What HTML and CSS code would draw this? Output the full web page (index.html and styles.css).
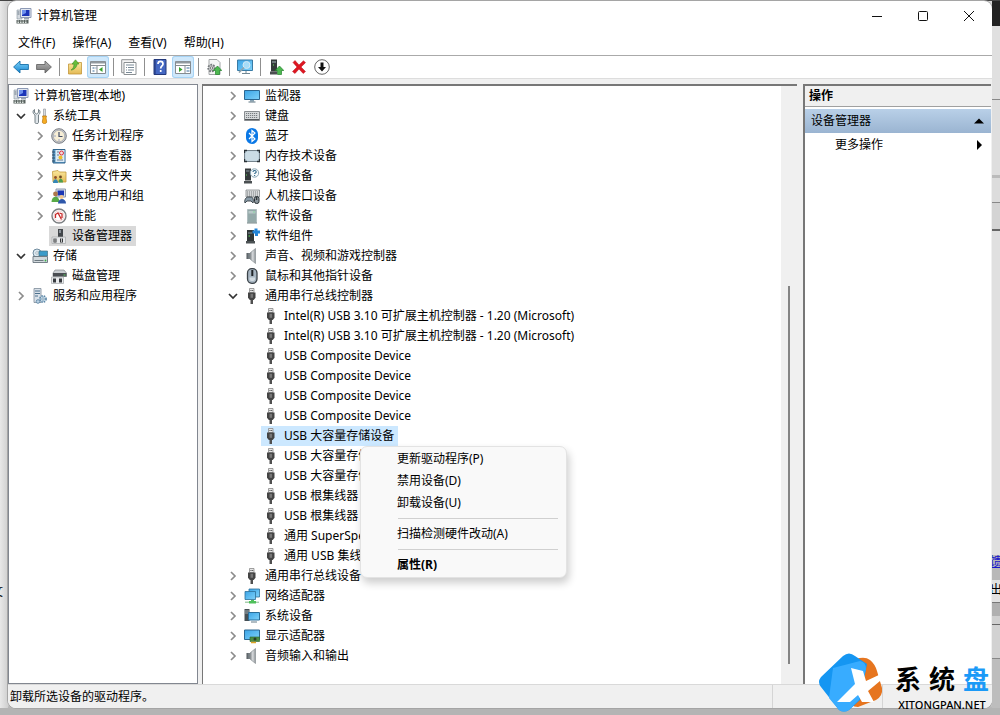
FILE: index.html
```html
<!DOCTYPE html>
<html lang="zh-CN">
<head>
<meta charset="utf-8">
<title>计算机管理</title>
<link rel="stylesheet" href="styles.css">
</head>
<body>
<svg class="sprite" aria-hidden="true">
  <defs>
    <linearGradient id="g-screen" x1="0" y1="0" x2="1" y2="1"><stop offset="0" stop-color="#3ba4e6"/><stop offset="1" stop-color="#7fd2fa"/></linearGradient>
    <linearGradient id="g-grey" x1="0" y1="0" x2="1" y2="0"><stop offset="0" stop-color="#7d8286"/><stop offset=".5" stop-color="#d9dcde"/><stop offset="1" stop-color="#8a8f93"/></linearGradient>
    <linearGradient id="g-fold" x1="0" y1="0" x2="0" y2="1"><stop offset="0" stop-color="#fbe9a0"/><stop offset="1" stop-color="#e3b955"/></linearGradient>
    <linearGradient id="g-back" x1="0" y1="0" x2="0" y2="1"><stop offset="0" stop-color="#7fd4fa"/><stop offset="1" stop-color="#1583cf"/></linearGradient>
    <linearGradient id="g-fwd" x1="0" y1="0" x2="0" y2="1"><stop offset="0" stop-color="#b8b8b8"/><stop offset="1" stop-color="#6f6f6f"/></linearGradient>
  </defs>
  <symbol id="computer" viewBox="0 0 16 16"><path d="M1 2h5v9H1z" fill="#d5dae0" stroke="#8793a0" stroke-width=".6"/><path d="M1.500 4h2M1.500 6h2" stroke="#6d7b88"/><path d="M4.500.5h10.500v9H4.500z" fill="#e3e8f0" stroke="#8d9ab5"/><path d="M6 2h7.500v6H6z" fill="#1c35b8"/><path d="M6 2h4v3l-4 2z" fill="#6e91ed"/><path d="M8 10h5v1.500H8z" fill="#9aa3b0"/><path d="M.5 12h12v3.500H.5z" fill="#59625f"/><path d="M1.500 13h10M1.500 14.500h10" stroke="#d9e0dc" stroke-dasharray="1.500 1"/></symbol>
  <symbol id="tools" viewBox="0 0 16 16"><path d="M2.500 1.500v3l2 1.500 2-1.500v-3c2 1 2 4 0 5.500v7.500c0 1.500-3.500 1.500-3.500 0V7C.500 5.500.500 2.500 2.500 1.500z" fill="#dfe5e9" stroke="#69757c" stroke-width=".9"/><path d="M11.500 1h2v7h-2z" fill="#d7dadd" stroke="#8d9298" stroke-width=".6"/><path d="M10.500 8h4l-.5 2 .7 4c0 2-4.400 2-4.400 0l.7-4z" fill="#f6ad23" stroke="#b7740d" stroke-width=".7"/></symbol>
  <symbol id="clock" viewBox="0 0 16 16"><circle cx="8" cy="8" r="7.300" fill="#c8cbd0" stroke="#6e7278" stroke-width=".9"/><circle cx="8" cy="8" r="5.700" fill="#f7eed6" stroke="#9da1a8" stroke-width=".7"/><path d="M8 4v4.500h3.500" fill="none" stroke="#414c66" stroke-width="1.200"/><path d="M3.500 8h1M8 12.500v-1" stroke="#3d5eb5"/></symbol>
  <symbol id="event" viewBox="0 0 16 16"><path d="M2 1.500h12v13.500H2z" fill="#5b9cc9" stroke="#32658d"/><path d="M4.500 2h9v12h-9z" fill="#dcebf6"/><path d="M1 4h3M1 7h3M1 10h3M1 13h3" stroke="#324f66"/><path d="M6 4h2M6 7h2M6 12h6" stroke="#687f92"/><circle cx="10.500" cy="5" r="2" fill="#f3d9da" stroke="#dc3140"/><circle cx="9.500" cy="9.500" r="2" fill="#eebf2e"/></symbol>
  <symbol id="share" viewBox="0 0 16 16"><path d="M1.500 3.500L7 2.500l1.500 1.500h6.500v10H2z" fill="url(#g-fold)" stroke="#c49a3b" stroke-width=".8"/><circle cx="4.500" cy="9.500" r="1.400" fill="#90512c"/><path d="M2 15c0-5 5-5 5 0z" fill="#3587b7"/><circle cx="9.500" cy="9" r="1.400" fill="#6b4825"/><path d="M7.500 14.500c0-5 4.500-5 4.500 0z" fill="#4c9e50"/></symbol>
  <symbol id="users" viewBox="0 0 16 16"><path d="M5 1h9.500v8H5z" fill="#d8dee9" stroke="#8c98ae"/><path d="M6.500 2.500H13v5H6.500z" fill="#1a35b4"/><circle cx="4.500" cy="6" r="2.400" fill="#ad774a"/><path d="M.5 14c0-7 8-7 8 0z" fill="#58aa47"/><circle cx="10.500" cy="9" r="2" fill="#efc58e"/><path d="M7 15.500c0-6 8-6 8 0z" fill="#2e57aa"/></symbol>
  <symbol id="perf" viewBox="0 0 16 16"><circle cx="8" cy="8" r="7" fill="#f8f8f8" stroke="#7c7f82" stroke-width="1.400"/><circle cx="8" cy="8" r="5" fill="#fff" stroke="#e6b8b8" stroke-width=".6"/><path d="M4.500 10V6.500L7 5l3.500 6.500M11 10V6L8.500 5" fill="none" stroke="#c72b2b" stroke-width="1.300"/></symbol>
  <symbol id="devmgr" viewBox="0 0 16 16"><path d="M7 1h5v8H7z" fill="#42464a"/><path d="M8 2h2v3H8z" fill="#899097"/><path d="M1 9h13.500v6.500H1z" fill="#e7e9eb" stroke="#a6a9ab" stroke-width=".7"/><path d="M2.500 10.500h3v4h-3zM9 10.500h3v4H9z" fill="#36393b"/><path d="M4 10.500V14M10.500 10.500V14" stroke="#fff" stroke-width=".7"/></symbol>
  <symbol id="storage" viewBox="0 0 16 16"><circle cx="5" cy="5" r="4" fill="#dce8ef" stroke="#6f8b9e"/><circle cx="5" cy="5" r="1.300" fill="#fff" stroke="#8798a4" stroke-width=".6"/><path d="M7 3h8.500v5H7z" fill="#3b9cca" stroke="#477284" stroke-width=".7"/><path d="M1 8.500h14.500v6H1z" fill="#d2d9dd" stroke="#69757d" stroke-width=".9"/><path d="M2.500 12.500h9" stroke="#6d7980"/><circle cx="13.500" cy="12.500" r=".9" fill="#38ae48"/></symbol>
  <symbol id="disk" viewBox="0 0 16 16"><path d="M4 2h9l2.500 3v3.500H2V5z" fill="#caced2" stroke="#74797e" stroke-width=".6"/><path d="M2 5h13.500v3.500H2z" fill="#4a4e52"/><path d="M12.500 7h2" stroke="#59ca5f"/><path d="M.5 9h12v6.500H.5z" fill="#e9ebed" stroke="#a4a8ab" stroke-width=".7"/><path d="M2 10.500h3v4H2zM8 10.500h3v4H8z" fill="#373a3e"/></symbol>
  <symbol id="services" viewBox="0 0 16 16"><path d="M2 .5h7v14H2z" fill="#d9e1e9" stroke="#7d8c99" stroke-width=".8"/><path d="M3 3h5M3 5.500h5M3 8h3" stroke="#4d718d"/><circle cx="11" cy="11" r="3.100" fill="#c8dcea" stroke="#5c86a6" stroke-dasharray="1.500 1" stroke-width="1.600"/><circle cx="11" cy="11" r="1.200" fill="#fff" stroke="#57819f" stroke-width=".7"/><circle cx="6" cy="13.500" r="1.800" fill="#b9d1e4" stroke="#6a8fab"/></symbol>
  <symbol id="monitor" viewBox="0 0 16 16"><path d="M.5 2.500h15v9H.5z" fill="url(#g-screen)" stroke="#2c6791"/><path d="M6 12h4v1.500H6z" fill="#89a4b4"/><path d="M4.500 14h7" stroke="#5c7482"/></symbol>
  <symbol id="keyboard" viewBox="0 0 16 16"><path d="M.5 3.500h15v9H.5z" fill="#d7dadc" stroke="#898d90"/><path d="M2 5.500h12M2 7.500h12M2 9.500h12" stroke="#787d80" stroke-dasharray="1.200 .8"/><path d="M1 11.500h14" stroke="#55595c"/></symbol>
  <symbol id="bluetooth" viewBox="0 0 16 16"><rect x="2" width="12" height="16" rx="6" fill="#0a78e6"/><path d="M5 5l6 6-3 2.500v-11L11 5l-6 6" fill="none" stroke="#fff" stroke-width="1.200"/></symbol>
  <symbol id="memory" viewBox="0 0 16 16"><rect x=".5" y="2.500" width="15" height="11" rx="1" fill="#c1d4df" stroke="#75838c"/><path d="M2 3.500h12v9H2z" fill="#cbdce5"/><path d="M.5 5V2.500H3M13 2.500h2.500V5M.5 11v2.500H3M13 13.500h2.500V11" fill="none" stroke="#293136" stroke-width="1.400"/></symbol>
  <symbol id="other" viewBox="0 0 16 16"><path d="M1 .5h6v12H1z" fill="#34393b"/><path d="M2 2h3.500v2H2z" fill="#5f696e"/><path d="M2 7h1" stroke="#64d45c"/><path d="M0 13h8v2.500H0z" fill="#4b5052"/><circle cx="10.500" cy="5" r="4.200" fill="#f5f9fb" stroke="#89a5b4"/><path d="M9 4c0-2 3.200-2 3.200 0 0 1-1.600 1-1.600 2M10.600 7v1" fill="none" stroke="#2f678a" stroke-width="1.100"/></symbol>
  <symbol id="hid" viewBox="0 0 16 16"><path d="M2 2h13.500v7H2z" fill="#dfe1e2" stroke="#84898c" stroke-width=".8"/><path d="M3 4h11M3 6h11M3 8h11" stroke="#73787b" stroke-dasharray="1.200 .8"/><path d="M1 15c-1-3 1-6 3-6h3c2 0 3 3 2 6l-2-2H3z" fill="#8b9ca8" stroke="#333c43" stroke-width=".9"/><rect x="10.500" y="8.500" width="4.500" height="7" rx="2" fill="#8b969d" stroke="#283035"/><path d="M12.700 9v3" stroke="#222"/></symbol>
  <symbol id="software" viewBox="0 0 16 16"><path d="M3.500 1.500h9v13h-9z" fill="#94a9a9" stroke="#b0bec0"/><path d="M4.500 3h7v2.500h-7z" fill="#b7c8c8"/><path d="M9.500 4h1" stroke="#54df77"/><path d="M3 15h10" stroke="#788989"/></symbol>
  <symbol id="component" viewBox="0 0 16 16"><path d="M3 2h7v11H3z" fill="#303637"/><path d="M4 4h4v2H4z" fill="#596568"/><path d="M4.500 8h1.500" stroke="#58da58"/><path d="M2 13h9v2.500H2z" fill="#4c5254"/><path d="M8.500 2.500h2V.5h3v2H16v3h-2v2.500h-3V5.500H8.500z" fill="#2384d7"/></symbol>
  <symbol id="speaker" viewBox="0 0 16 16"><path d="M3 5h3v6H3z" fill="#737b80"/><path d="M6 5l5.500-4.500v15L6 11z" fill="url(#g-grey)" stroke="#8a9094" stroke-width=".7"/><path d="M3 5v6" stroke="#4f5559"/></symbol>
  <symbol id="mouse" viewBox="0 0 16 16"><rect x="3.500" y=".7" width="9.500" height="14.600" rx="4.200" fill="#a8b6c2" stroke="#3c4349" stroke-width="1.300"/><path d="M8.300 2v6" stroke="#202427" stroke-width="2"/><path d="M5.500 9.500v2c1 2 4.500 2 5.500 0v-2" fill="#d3dce2"/></symbol>
  <symbol id="usb" viewBox="0 0 16 16"><path d="M5.500.5h4.500v4H5.500z" fill="#e6e6e6" stroke="#888" stroke-width=".8"/><path d="M6.500 2.500h1M8.200 2.500h1" stroke="#444"/><path d="M4 4.500h7.500v5.300L9.700 12H5.800L4 9.800z" fill="#444"/><path d="M6.500 5.800h2.600v4H6.500z" fill="#777"/><path d="M6.500 12h2.500v4H6.500z" fill="#505050"/></symbol>
  <symbol id="network" viewBox="0 0 16 16"><path d="M5 1h10.500v8H5z" fill="url(#g-screen)" stroke="#2c7099" stroke-width=".8"/><path d="M1 3.500h10.500v8H1z" fill="url(#g-screen)" stroke="#2c7099" stroke-width=".8"/><path d="M1 14.300h14" stroke="#a9cfae" stroke-width="1.400"/><path d="M7 12h3v1h2v2.500H5V13h2z" fill="#4fc05b"/></symbol>
  <symbol id="system" viewBox="0 0 16 16"><path d="M.5 1h5v12h-5z" fill="#464f54"/><path d="M1 3h4M1 5h4" stroke="#9ba9b0"/><path d="M4.500 4.500h11v7.500h-11z" fill="url(#g-screen)" stroke="#2a6e9a"/><path d="M7 14h6" stroke="#627b88"/></symbol>
  <symbol id="display" viewBox="0 0 16 16"><path d="M.5 2h15v9.500H.5z" fill="url(#g-screen)" stroke="#2c6791"/><path d="M6 9h9.500v4.500H6z" fill="#4d8d43" stroke="#29632d" stroke-width=".6"/><circle cx="11" cy="11" r="1.500" fill="#293d2c"/><path d="M7 14.500h5" stroke="#dfa526" stroke-width="1.500"/></symbol>
  <symbol id="back" viewBox="0 0 16 16"><path d="M.6 8l6.400-6v3.500h8.400v5H7V14z" fill="url(#g-back)" stroke="#176fa9" stroke-width=".9"/></symbol>
  <symbol id="forward" viewBox="0 0 16 16"><path d="M15.400 8L9 2v3.500H.6v5H9V14z" fill="url(#g-fwd)" stroke="#666" stroke-width=".9"/></symbol>
  <symbol id="up" viewBox="0 0 16 16"><path d="M1.500 5h5l1.500-1.500h6.500V15h-13z" fill="url(#g-fold)" stroke="#c39538" stroke-width=".8"/><path d="M4 11c2-1 3-3 3-6H5L8.500.8 12 5h-2c0 3-3 6-6 6z" fill="#67bd3b" stroke="#3e8d27" stroke-width=".6"/></symbol>
  <symbol id="tree-pane" viewBox="0 0 16 16"><path d="M.5 2.500h15v12H.5z" fill="#fff" stroke="#858b90"/><path d="M1 3.500h14" stroke="#91999f" stroke-width="2"/><path d="M1 6.500h14M7 6.500V14" stroke="#858b90"/><path d="M2.500 9h2M2.500 12h2M5.500 9h.8" stroke="#3a6d9a" stroke-width="1.200"/><path d="M12.500 8v5L9 10.500z" fill="#37a32b"/></symbol>
  <symbol id="action-pane" viewBox="0 0 16 16"><path d="M.5 2.500h15v12H.5z" fill="#fff" stroke="#858b90"/><path d="M1 3.500h14" stroke="#91999f" stroke-width="2"/><path d="M1 6.500h14M10 6.500V14" stroke="#858b90"/><path d="M11.500 9h3M11.500 12h3" stroke="#3a6d9a" stroke-width="1.200"/><path d="M4 8v5l3.500-2.500z" fill="#37a32b"/></symbol>
  <symbol id="props" viewBox="0 0 16 16"><path d="M.7.7h12v13H.7z" fill="#f4f4f4" stroke="#8f9294"/><path d="M3 3.500h12v12H3z" fill="#fff" stroke="#8b9093"/><path d="M5 6h8M5 8.500h1M7 8.500h6M5 11h1M7 11h6M5 13.500h6" stroke="#798a97"/></symbol>
  <symbol id="help" viewBox="0 0 16 16"><path d="M2 .5h12v15H2z" fill="#4467c2" stroke="#23387b"/><path d="M3 1v14" stroke="#1e3274"/><path d="M6 5c0-3.500 5-3.500 5 0 0 2-2.300 2-2.300 4.500M8.700 11v2" fill="none" stroke="#fff" stroke-width="1.700"/></symbol>
  <symbol id="scan" viewBox="0 0 16 16"><path d="M3 .5h8l3 3v12H3z" fill="#f5f5f5" stroke="#a2a5a7"/><circle cx="5.500" cy="9" r="3.300" fill="#c9cbcc" stroke="#777b7e" stroke-width="1.800" stroke-dasharray="1.800 1"/><circle cx="5.500" cy="9" r="1.200" fill="#fff" stroke="#777"/><path d="M11.500 7l4.300 4.500h-2.300v4h-4v-4H7.200z" fill="#4db850" stroke="#23832b" stroke-width=".7"/></symbol>
  <symbol id="search" viewBox="0 0 16 16"><path d="M.5 1h15v10.500H.5z" fill="url(#g-screen)" stroke="#397ba5"/><path d="M5 14.500h8M9 12v2" stroke="#728894"/><circle cx="9.500" cy="6" r="3.500" fill="#a5dcf8" stroke="#d3e9f5"/><path d="M7 8.500L2 13.500" stroke="#90a3ad" stroke-width="1.700"/></symbol>
  <symbol id="enable" viewBox="0 0 16 16"><path d="M3 .5h6v12H3z" fill="#363a3c"/><path d="M4 2h4v2H4z" fill="#707a7e"/><path d="M5 6h1" stroke="#68e15d"/><path d="M2 12.500h7v3H2z" fill="#4a4e50"/><path d="M11.500 7l4.300 4.500h-2.300v4h-4v-4H7.200z" fill="#4db850" stroke="#23832b" stroke-width=".7"/></symbol>
  <symbol id="delete" viewBox="0 0 16 16"><path d="M2 3.500L4 1.500 8 6l4.500-4.300 2 2L10 8l4.500 4.500-2.300 2L8 10l-4 4.500-2.500-2L6 8z" fill="#de1722" stroke="#b80c18" stroke-width=".5"/></symbol>
  <symbol id="disable" viewBox="0 0 16 16"><circle cx="8" cy="8" r="7.300" fill="#fff" stroke="#555" stroke-width=".9"/><path d="M6.500 3.500h3V8H12l-4 4.500L4 8h2.500z" fill="#111"/></symbol>
  <symbol id="chev-r" viewBox="0 0 10 10"><path d="M3 1L7 5 3 9" fill="none" stroke="#8c8c8c" stroke-width="1.700"/></symbol>
  <symbol id="chev-d" viewBox="0 0 10 10"><path d="M1 3l4 4 4-4" fill="none" stroke="#333" stroke-width="1.700"/></symbol>
</svg>

<div class="desktop">
  <div class="edge edge-left"><span class="edge-text">文</span></div>

  <main class="window">
    <header class="titlebar">
      <svg class="icon"><use href="#computer"/></svg>
      <h1 class="title">计算机管理</h1>
      <div class="caption">
        <button class="caption-btn" aria-label="最小化"><svg class="glyph" viewBox="0 0 12 12"><path d="M1 6.500h10"/></svg></button>
        <button class="caption-btn" aria-label="最大化"><svg class="glyph" viewBox="0 0 12 12"><rect x="1.500" y="1.500" width="9" height="9" rx="1"/></svg></button>
        <button class="caption-btn" aria-label="关闭"><svg class="glyph" viewBox="0 0 12 12"><path d="M1 1l10 10M11 1L1 11"/></svg></button>
      </div>
    </header>

    <nav class="menubar">
      <button class="menu-btn">文件(F)</button>
      <button class="menu-btn">操作(A)</button>
      <button class="menu-btn">查看(V)</button>
      <button class="menu-btn">帮助(H)</button>
    </nav>

    <div class="toolbar" role="toolbar" aria-label="工具栏">
      <button class="tool" aria-label="后退"><svg class="icon"><use href="#back"/></svg></button>
      <button class="tool" aria-label="前进"><svg class="icon"><use href="#forward"/></svg></button>
      <span class="divider"></span>
      <button class="tool" aria-label="上移一级"><svg class="icon"><use href="#up"/></svg></button>
      <button class="tool tool-on" aria-label="显示/隐藏控制台树"><svg class="icon"><use href="#tree-pane"/></svg></button>
      <span class="divider"></span>
      <button class="tool" aria-label="属性"><svg class="icon"><use href="#props"/></svg></button>
      <span class="divider"></span>
      <button class="tool" aria-label="帮助"><svg class="icon"><use href="#help"/></svg></button>
      <button class="tool tool-on" aria-label="显示/隐藏操作窗格"><svg class="icon"><use href="#action-pane"/></svg></button>
      <span class="divider"></span>
      <button class="tool" aria-label="更新驱动程序"><svg class="icon"><use href="#scan"/></svg></button>
      <span class="divider"></span>
      <button class="tool" aria-label="扫描检测硬件改动"><svg class="icon"><use href="#search"/></svg></button>
      <span class="divider"></span>
      <button class="tool" aria-label="启用设备"><svg class="icon"><use href="#enable"/></svg></button>
      <button class="tool" aria-label="卸载设备"><svg class="icon"><use href="#delete"/></svg></button>
      <button class="tool" aria-label="禁用设备"><svg class="icon"><use href="#disable"/></svg></button>
    </div>

    <div class="panes">
      <section class="pane nav-pane">
        <ul class="tree nav-tree">
          <li class="row root"><span class="item"><svg class="icon"><use href="#computer"/></svg>计算机管理(本地)</span></li>
          <li class="row"><button class="toggle" aria-label="折叠"><svg class="chev"><use href="#chev-d"/></svg></button><span class="item"><svg class="icon"><use href="#tools"/></svg>系统工具</span></li>
          <li class="row sub"><button class="toggle" aria-label="展开"><svg class="chev"><use href="#chev-r"/></svg></button><span class="item"><svg class="icon"><use href="#clock"/></svg>任务计划程序</span></li>
          <li class="row sub"><button class="toggle" aria-label="展开"><svg class="chev"><use href="#chev-r"/></svg></button><span class="item"><svg class="icon"><use href="#event"/></svg>事件查看器</span></li>
          <li class="row sub"><button class="toggle" aria-label="展开"><svg class="chev"><use href="#chev-r"/></svg></button><span class="item"><svg class="icon"><use href="#share"/></svg>共享文件夹</span></li>
          <li class="row sub"><button class="toggle" aria-label="展开"><svg class="chev"><use href="#chev-r"/></svg></button><span class="item"><svg class="icon"><use href="#users"/></svg>本地用户和组</span></li>
          <li class="row sub"><button class="toggle" aria-label="展开"><svg class="chev"><use href="#chev-r"/></svg></button><span class="item"><svg class="icon"><use href="#perf"/></svg>性能</span></li>
          <li class="row sub leaf"><span class="item item-current"><svg class="icon"><use href="#devmgr"/></svg>设备管理器</span></li>
          <li class="row"><button class="toggle" aria-label="折叠"><svg class="chev"><use href="#chev-d"/></svg></button><span class="item"><svg class="icon"><use href="#storage"/></svg>存储</span></li>
          <li class="row sub leaf"><span class="item"><svg class="icon"><use href="#disk"/></svg>磁盘管理</span></li>
          <li class="row"><button class="toggle" aria-label="展开"><svg class="chev"><use href="#chev-r"/></svg></button><span class="item"><svg class="icon"><use href="#services"/></svg>服务和应用程序</span></li>
        </ul>
      </section>

      <section class="pane device-pane">
        <ul class="tree device-tree">
          <li class="row"><button class="toggle" aria-label="展开"><svg class="chev"><use href="#chev-r"/></svg></button><span class="item"><svg class="icon"><use href="#monitor"/></svg>监视器</span></li>
          <li class="row"><button class="toggle" aria-label="展开"><svg class="chev"><use href="#chev-r"/></svg></button><span class="item"><svg class="icon"><use href="#keyboard"/></svg>键盘</span></li>
          <li class="row"><button class="toggle" aria-label="展开"><svg class="chev"><use href="#chev-r"/></svg></button><span class="item"><svg class="icon"><use href="#bluetooth"/></svg>蓝牙</span></li>
          <li class="row"><button class="toggle" aria-label="展开"><svg class="chev"><use href="#chev-r"/></svg></button><span class="item"><svg class="icon"><use href="#memory"/></svg>内存技术设备</span></li>
          <li class="row"><button class="toggle" aria-label="展开"><svg class="chev"><use href="#chev-r"/></svg></button><span class="item"><svg class="icon"><use href="#other"/></svg>其他设备</span></li>
          <li class="row"><button class="toggle" aria-label="展开"><svg class="chev"><use href="#chev-r"/></svg></button><span class="item"><svg class="icon"><use href="#hid"/></svg>人机接口设备</span></li>
          <li class="row"><button class="toggle" aria-label="展开"><svg class="chev"><use href="#chev-r"/></svg></button><span class="item"><svg class="icon"><use href="#software"/></svg>软件设备</span></li>
          <li class="row"><button class="toggle" aria-label="展开"><svg class="chev"><use href="#chev-r"/></svg></button><span class="item"><svg class="icon"><use href="#component"/></svg>软件组件</span></li>
          <li class="row"><button class="toggle" aria-label="展开"><svg class="chev"><use href="#chev-r"/></svg></button><span class="item"><svg class="icon"><use href="#speaker"/></svg>声音、视频和游戏控制器</span></li>
          <li class="row"><button class="toggle" aria-label="展开"><svg class="chev"><use href="#chev-r"/></svg></button><span class="item"><svg class="icon"><use href="#mouse"/></svg>鼠标和其他指针设备</span></li>
          <li class="row"><button class="toggle" aria-label="折叠"><svg class="chev"><use href="#chev-d"/></svg></button><span class="item"><svg class="icon"><use href="#usb"/></svg>通用串行总线控制器</span></li>
          <li class="row sub leaf"><span class="item"><svg class="icon"><use href="#usb"/></svg>Intel(R) USB 3.10 可扩展主机控制器 - 1.20 (Microsoft)</span></li>
          <li class="row sub leaf"><span class="item"><svg class="icon"><use href="#usb"/></svg>Intel(R) USB 3.10 可扩展主机控制器 - 1.20 (Microsoft)</span></li>
          <li class="row sub leaf"><span class="item"><svg class="icon"><use href="#usb"/></svg>USB Composite Device</span></li>
          <li class="row sub leaf"><span class="item"><svg class="icon"><use href="#usb"/></svg>USB Composite Device</span></li>
          <li class="row sub leaf"><span class="item"><svg class="icon"><use href="#usb"/></svg>USB Composite Device</span></li>
          <li class="row sub leaf"><span class="item"><svg class="icon"><use href="#usb"/></svg>USB Composite Device</span></li>
          <li class="row sub leaf"><span class="item item-selected"><svg class="icon"><use href="#usb"/></svg>USB 大容量存储设备</span>
            <div class="context-menu" role="menu">
              <button class="context-item" role="menuitem">更新驱动程序(P)</button>
              <button class="context-item" role="menuitem">禁用设备(D)</button>
              <button class="context-item" role="menuitem">卸载设备(U)</button>
              <hr class="context-line">
              <button class="context-item" role="menuitem">扫描检测硬件改动(A)</button>
              <hr class="context-line">
              <button class="context-item context-default" role="menuitem">属性(R)</button>
            </div>
          </li>
          <li class="row sub leaf"><span class="item"><svg class="icon"><use href="#usb"/></svg>USB 大容量存储设备</span></li>
          <li class="row sub leaf"><span class="item"><svg class="icon"><use href="#usb"/></svg>USB 大容量存储设备</span></li>
          <li class="row sub leaf"><span class="item"><svg class="icon"><use href="#usb"/></svg>USB 根集线器</span></li>
          <li class="row sub leaf"><span class="item"><svg class="icon"><use href="#usb"/></svg>USB 根集线器</span></li>
          <li class="row sub leaf"><span class="item"><svg class="icon"><use href="#usb"/></svg>通用 SuperSpeed</span></li>
          <li class="row sub leaf"><span class="item"><svg class="icon"><use href="#usb"/></svg>通用 USB 集线器</span></li>
          <li class="row"><button class="toggle" aria-label="展开"><svg class="chev"><use href="#chev-r"/></svg></button><span class="item"><svg class="icon"><use href="#usb"/></svg>通用串行总线设备</span></li>
          <li class="row"><button class="toggle" aria-label="展开"><svg class="chev"><use href="#chev-r"/></svg></button><span class="item"><svg class="icon"><use href="#network"/></svg>网络适配器</span></li>
          <li class="row"><button class="toggle" aria-label="展开"><svg class="chev"><use href="#chev-r"/></svg></button><span class="item"><svg class="icon"><use href="#system"/></svg>系统设备</span></li>
          <li class="row"><button class="toggle" aria-label="展开"><svg class="chev"><use href="#chev-r"/></svg></button><span class="item"><svg class="icon"><use href="#display"/></svg>显示适配器</span></li>
          <li class="row"><button class="toggle" aria-label="展开"><svg class="chev"><use href="#chev-r"/></svg></button><span class="item"><svg class="icon"><use href="#speaker"/></svg>音频输入和输出</span></li>
        </ul>
        <div class="scrollbar"><div class="thumb"></div></div>
      </section>

      <aside class="pane action-pane">
        <h2 class="action-title">操作</h2>
        <button class="action-group">设备管理器<svg class="arrow" viewBox="0 0 10 10"><path d="M0 7.500L5 2.500l5 5z"/></svg></button>
        <button class="action-more">更多操作<svg class="arrow" viewBox="0 0 10 10"><path d="M3 0l5 5-5 5z"/></svg></button>
      </aside>
    </div>

    <footer class="statusbar"><span class="status-text">卸载所选设备的驱动程序。</span><span class="status-cell"></span><span class="status-cell"></span></footer>
  </main>

  <div class="edge edge-right"><a class="edge-link" href="#">馈</a><span class="edge-text">出</span></div>

  <div class="brand">
    <svg class="brand-logo" viewBox="0 0 66 60"><path d="M38 6q9-3 14 1 5 4 7 11l5 17q1 8-6 12l-18 7q-8 0-10-8z" fill="#e6751f"/><path d="M25 3q6-5 12 0l12 8-7 36-11 10q-5 3-10 0L3 34q-4-5 0-10z" fill="#1596f2"/><path d="M15 15l27-7q6 1 6 8l-7 31-10 10q-5 3-10 0L11 45z" fill="#38acff"/><path d="M33 15l12 3 3 10 15-7-1 7-12 10 6 11H44l-4-7-8 7H19l18-18z" fill="#fff"/></svg>
    <div class="brand-words">
      <div class="brand-name"><span>系</span><span>统</span><span class="brand-accent">盘</span></div>
      <div class="brand-url">XITONGPAN.NET</div>
    </div>
  </div>
</div>
</body>
</html>
```
FILE: styles.css
```css
* { box-sizing: border-box; }

body {
  margin: 0;
  font: 12px/20px "Noto Sans", "Noto Sans CJK SC", sans-serif;
  color: #000;
}

button {
  margin: 0;
  padding: 0;
  border: 0;
  background: none;
  font: inherit;
  color: inherit;
}

ul { margin: 0; padding: 0; list-style: none; }

.sprite { position: absolute; width: 0; height: 0; }
.icon { flex: none; width: 16px; height: 16px; }

.desktop {
  position: relative;
  display: grid;
  grid-template-columns: 8px 1fr 8px;
  min-height: 100vh;
  padding: 1px 0 7px;
  overflow: hidden;
  background: linear-gradient(#444 0 1px, transparent 1px), linear-gradient(to top, #b4b4b4 0 7px, #d8d8d8 12px);
}

.edge { display: flex; flex-direction: column; overflow: hidden; }
.edge-left {
  justify-content: flex-end;
  align-items: flex-start;
  padding-bottom: 106px;
  background: linear-gradient(to right, #e8e8e8, #cfcfcf);
}
.edge-left .edge-text { margin-left: -9px; }
.edge-right {
  justify-content: flex-end;
  padding-bottom: 108px;
  background: linear-gradient(#222 0 25px, #e0e0e0 25px 98px, #888 98px 99px, #dedede 99px 174px, #bbb 174px 177px, #dcdcdc 177px 201px, #888 201px 202px, #d4d4d4 202px 228px, #666 228px 230px, #e0e0e0 230px 554px, #b8b8b8 554px 579px, #e2e2e2 579px 601px, #777 601px 602px, #b0b0b0 602px 615px, #d0d0d0 615px 623px, #666 623px 624px, #d2d2d2 624px 657px, #888 657px 658px, #bdbdbd 658px);
}
.edge-right .edge-text { margin: 8px 0 0 -2px; }
.edge-link { margin-left: -2px; color: #1616cc; }

.window {
  display: flex;
  flex-direction: column;
  min-width: 0;
  overflow: hidden;
  border-radius: 8px;
  background: #fff;
  box-shadow: 0 0 0 1px #a5a5a5;
}

.titlebar { display: flex; align-items: center; gap: 5px; height: 29px; padding-left: 8px; }
.title { margin: 0; font-size: 12px; font-weight: 400; }
.caption { display: flex; margin-left: auto; }
.caption-btn { display: grid; place-items: center; width: 46px; height: 28px; }
.glyph { width: 12px; height: 12px; fill: none; stroke: #111; stroke-width: 1; }

.menubar { display: flex; align-items: center; gap: 1px; height: 25px; padding: 0 2px; }
.menu-btn { padding: 0 8px; white-space: nowrap; }

.toolbar {
  display: flex;
  align-items: center;
  gap: 1px;
  height: 24px;
  padding-left: 2px;
  border-top: 1px solid #aaa;
  border-bottom: 1px solid #ddd;
}
.tool { display: grid; place-items: center; width: 22px; height: 22px; border-radius: 3px; }
.tool-on { background: #cfe8fb; box-shadow: inset 0 0 0 1px #a6d3f4; }
.divider { width: 1px; height: 18px; margin: 0 3px; background: #8f8f8f; }

.panes {
  flex: 1;
  display: grid;
  grid-template-columns: 190px 1fr 188px;
  gap: 4px;
  padding: 5px 1px 0 0;
  background: #f0f0f0;
}
.pane { min-width: 0; border: 1px solid #828790; background: #fff; }
.nav-pane { padding-top: 1px; }
.device-pane { display: flex; margin-right: 2px; border-width: 2px 0 0 1px; border-color: #777; }
.action-pane { border-width: 2px 0 0 2px; border-color: #777; }

.row { position: relative; display: flex; align-items: center; height: 20px; }
.toggle { display: grid; place-items: center; width: 16px; height: 20px; margin-right: 1px; }
.chev { width: 10px; height: 10px; }
.item {
  display: flex;
  align-items: center;
  gap: 5px;
  height: 20px;
  padding: 0 4px 0 2px;
  white-space: nowrap;
}
.item-current { background: #d9d9d9; }
.item-selected { background: #cce8ff; }

.nav-tree .row { padding-left: 4px; }
.nav-tree .root { padding-left: 2px; }
.nav-tree .sub { padding-left: 23px; }
.nav-tree .leaf { padding-left: 40px; }

.device-tree { flex: 1; min-width: 0; }
.device-tree .row { padding-left: 22px; }
.device-tree .sub { padding-left: 58px; }
.scrollbar { display: flex; flex-direction: column; align-items: center; width: 16px; padding: 200px 0 20px; background: #f0f0f0; }
.thumb { flex: 1; width: 2px; background: #858585; }

.context-menu {
  position: absolute;
  z-index: 1;
  top: 20px;
  left: 157px;
  width: 207px;
  padding: 1px 0;
  border: 1px solid #e3e3e3;
  border-radius: 7px;
  background: #f9f9f9;
  box-shadow: 2px 5px 8px rgba(0, 0, 0, .2);
}
.context-item { display: block; width: 100%; height: 22px; padding-left: 36px; text-align: left; }
.context-default { font-weight: 700; }
.context-line { height: 1px; margin: 4px 8px 4px 37px; border: 0; background: #d0d0d0; }

.action-title {
  height: 21px;
  margin: 0 0 2px;
  padding-left: 4px;
  border-bottom: 1px solid #a0a0a0;
  background: #f0f0f0;
  font-size: 12px;
  line-height: 20px;
}
.action-group, .action-more {
  display: flex;
  justify-content: space-between;
  align-items: center;
  width: 100%;
  height: 24px;
  padding: 0 7px 0 6px;
}
.action-group { background: linear-gradient(#b9d0e8, #9ab4d1); }
.action-more { padding-left: 30px; }
.arrow { width: 10px; height: 10px; }

.statusbar {
  display: flex;
  height: 24px;
  padding-left: 2px;
  border-top: 1px solid #d9d9d9;
  background: #f0f0f0;
  line-height: 24px;
}
.status-text { flex: 1; }
.status-cell { width: 110px; border-left: 1px solid #d5d5d5; }

.brand { position: absolute; right: 11px; bottom: 2px; display: flex; align-items: flex-end; gap: 11px; }
.brand-logo { width: 66px; height: 60px; }
.brand-name { display: flex; gap: 8px; font-size: 26px; font-weight: 700; line-height: 36px; }
.brand-accent { color: #1b9af7; }
.brand-url { font-size: 11px; font-weight: 500; line-height: 16px; text-align: center; }
```
